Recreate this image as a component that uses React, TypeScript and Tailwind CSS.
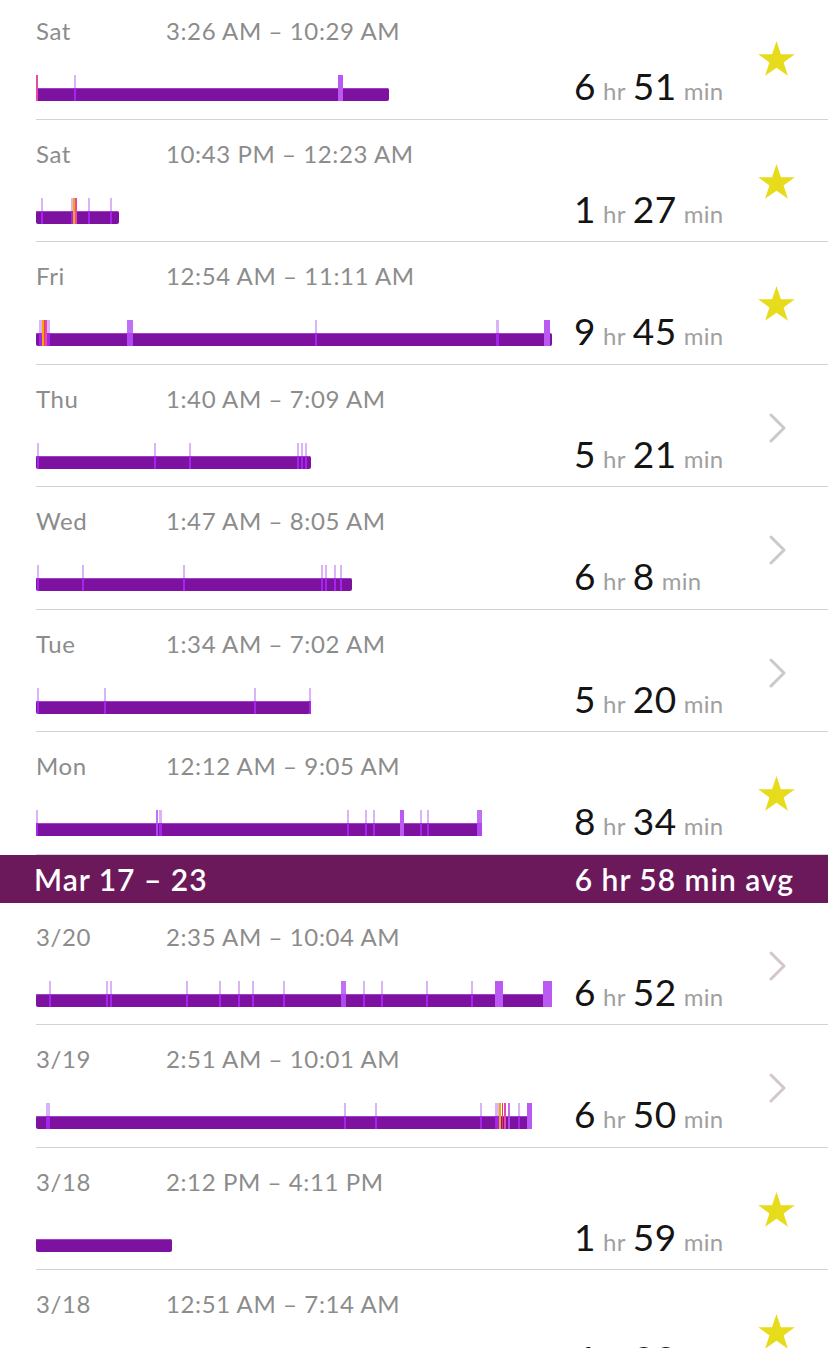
import React from "react";

type Tick = { x: number; w?: number; c?: "wide" | "pink" | "orange" | "red" | "bright" };

type Night = {
  day: string;
  time: string;
  hr: number;
  min: number;
  width: number;
  ticks: Tick[];
  icon: "star" | "chevron";
  chevronTint?: boolean;
};

const tickColors: Record<string, { top: string; body: string }> = {
  thin: { top: "#dbb4f7", body: "#a426ea" },
  wide: { top: "#bb5af2", body: "#bb5af2" },
  pink: { top: "#e64aa8", body: "#e64aa8" },
  orange: { top: "#f5a900", body: "#f5a900" },
  red: { top: "#ea3b5c", body: "#ea3b5c" },
  bright: { top: "#c070f5", body: "#b048f0" },
};

const week1: Night[] = [
  {
    day: "Sat",
    time: "3:26 AM – 10:29 AM",
    hr: 6,
    min: 51,
    width: 353,
    ticks: [{ x: 0, w: 2, c: "pink" }, { x: 38, w: 2 }, { x: 302, w: 5, c: "wide" }],
    icon: "star",
  },
  {
    day: "Sat",
    time: "10:43 PM – 12:23 AM",
    hr: 1,
    min: 27,
    width: 83,
    ticks: [
      { x: 5, w: 2 },
      { x: 35, w: 2 },
      { x: 37, w: 2, c: "orange" },
      { x: 39, w: 2, c: "pink" },
      { x: 52, w: 2 },
      { x: 74, w: 2 },
    ],
    icon: "star",
  },
  {
    day: "Fri",
    time: "12:54 AM – 11:11 AM",
    hr: 9,
    min: 45,
    width: 516,
    ticks: [
      { x: 3, w: 3 },
      { x: 6, w: 2, c: "orange" },
      { x: 8, w: 1, c: "red" },
      { x: 9, w: 2, c: "pink" },
      { x: 11, w: 3 },
      { x: 91, w: 6, c: "bright" },
      { x: 279, w: 2 },
      { x: 460, w: 3 },
      { x: 508, w: 6, c: "wide" },
    ],
    icon: "star",
  },
  {
    day: "Thu",
    time: "1:40 AM – 7:09 AM",
    hr: 5,
    min: 21,
    width: 275,
    ticks: [{ x: 1 }, { x: 118 }, { x: 153 }, { x: 261 }, { x: 265 }, { x: 269 }],
    icon: "chevron",
  },
  {
    day: "Wed",
    time: "1:47 AM – 8:05 AM",
    hr: 6,
    min: 8,
    width: 316,
    ticks: [{ x: 1 }, { x: 46 }, { x: 147 }, { x: 285 }, { x: 289 }, { x: 298 }, { x: 304 }],
    icon: "chevron",
  },
  {
    day: "Tue",
    time: "1:34 AM – 7:02 AM",
    hr: 5,
    min: 20,
    width: 274,
    ticks: [{ x: 1 }, { x: 68 }, { x: 218 }, { x: 273 }],
    icon: "chevron",
  },
  {
    day: "Mon",
    time: "12:12 AM – 9:05 AM",
    hr: 8,
    min: 34,
    width: 446,
    ticks: [
      { x: 0 },
      { x: 120, w: 2, c: "bright" },
      { x: 123, w: 3 },
      { x: 311 },
      { x: 329 },
      { x: 337 },
      { x: 364, w: 4, c: "wide" },
      { x: 384 },
      { x: 391 },
      { x: 441, w: 5, c: "bright" },
    ],
    icon: "star",
  },
];

const week2: Night[] = [
  {
    day: "3/20",
    time: "2:35 AM – 10:04 AM",
    hr: 6,
    min: 52,
    width: 516,
    ticks: [
      { x: 13 },
      { x: 70 },
      { x: 74 },
      { x: 150 },
      { x: 183 },
      { x: 202 },
      { x: 216 },
      { x: 247 },
      { x: 305, w: 5, c: "bright" },
      { x: 327 },
      { x: 345 },
      { x: 390 },
      { x: 435 },
      { x: 459, w: 8, c: "wide" },
      { x: 507, w: 9, c: "wide" },
    ],
    icon: "chevron",
    chevronTint: true,
  },
  {
    day: "3/19",
    time: "2:51 AM – 10:01 AM",
    hr: 6,
    min: 50,
    width: 496,
    ticks: [
      { x: 10, w: 4 },
      { x: 308 },
      { x: 339 },
      { x: 444 },
      { x: 459, w: 4 },
      { x: 463, w: 2, c: "orange" },
      { x: 466, w: 1, c: "red" },
      { x: 468, w: 2, c: "pink" },
      { x: 472, w: 2, c: "bright" },
      { x: 482 },
      { x: 491, w: 5, c: "wide" },
    ],
    icon: "chevron",
    chevronTint: true,
  },
  {
    day: "3/18",
    time: "2:12 PM – 4:11 PM",
    hr: 1,
    min: 59,
    width: 136,
    ticks: [],
    icon: "star",
  },
  {
    day: "3/18",
    time: "12:51 AM – 7:14 AM",
    hr: 6,
    min: 23,
    width: 420,
    ticks: [{ x: 2 }, { x: 90 }, { x: 240 }],
    icon: "star",
  },
];

function SleepBar({ width, ticks }: { width: number; ticks: Tick[] }) {
  return (
    <svg width={540} height={26} className="block">
      <rect x={0} y={13} width={width} height={13} rx={2} fill="#7d11a0" />
      <rect x={0} y={13} width={width - 2} height={1} fill="#a440c8" />
      {ticks.map((t, i) => {
        const col = tickColors[t.c ?? "thin"];
        const w = t.w ?? 2;
        return (
          <g key={i}>
            <rect x={t.x} y={0} width={w} height={13} fill={col.top} />
            <rect x={t.x} y={13} width={w} height={13} fill={col.body} />
          </g>
        );
      })}
    </svg>
  );
}

function Star() {
  return (
    <svg width={37} height={35} viewBox="0 0 37 35" className="block">
      <polygon
        points="18.5,0 22.9,13.2 36.8,13.3 25.6,21.5 29.9,34.8 18.5,26.7 7.1,34.8 11.4,21.5 0.2,13.3 14.1,13.2"
        fill="#e6dc1c"
      />
    </svg>
  );
}

function Chevron({ tint }: { tint?: boolean }) {
  return (
    <svg width={20} height={30} viewBox="0 0 20 30" className="block">
      <path
        d="M3 2 L16 15 L3 28"
        fill="none"
        stroke={tint ? "#d4c6cf" : "#c9c9ce"}
        strokeWidth={3}
        strokeLinecap="round"
        strokeLinejoin="round"
      />
    </svg>
  );
}

function NightRow({ night }: { night: Night }) {
  return (
    <div className="ml-[36px] h-[122.5px] border-b border-[#d8d1d2] flex">
      <div className="w-[538px] flex flex-col">
        <div className="flex pt-[20px] text-[24px] leading-[28px] tracking-[0.6px] text-[#8c8c8c]">
          <span className="w-[130px]">{night.day}</span>
          <span>{night.time}</span>
        </div>
        <div className="mt-[30px]">
          <SleepBar width={night.width} ticks={night.ticks} />
        </div>
      </div>
      <div className="w-[182px] pt-[70px] flex items-baseline leading-[37px] whitespace-nowrap">
        <span className="text-[37px] tracking-[0.5px] text-[#141414]">{night.hr}</span>
        <span className="text-[24px] tracking-[0.3px] text-[#a0a0a0] ml-[7px] mr-[7px]">hr</span>
        <span className="text-[37px] tracking-[0.5px] text-[#141414]">{night.min}</span>
        <span className="text-[24px] tracking-[0.3px] text-[#a0a0a0] ml-[7px]">min</span>
      </div>
      <div className="w-[40px] flex justify-center">
        {night.icon === "star" ? (
          <div className="pt-[44px]">
            <Star />
          </div>
        ) : (
          <div className="pt-[48px] pl-[4px]">
            <Chevron tint={night.chevronTint} />
          </div>
        )}
      </div>
    </div>
  );
}

export default function App() {
  return (
    <div
      className="w-[828px] h-[1348px] overflow-hidden bg-white"
      style={{ fontFamily: "Lato, 'Open Sans', sans-serif" }}
    >
      <div className="-mt-[3px]">
        {week1.map((n, i) => (
          <NightRow key={i} night={n} />
        ))}
        <div className="h-[48px] bg-[#6c195c] flex items-center justify-between pl-[34px] pr-[34px] text-white font-semibold text-[30px] tracking-[1px] leading-none">
          <span>Mar 17 – 23</span>
          <span>6 hr 58 min avg</span>
        </div>
        {week2.map((n, i) => (
          <NightRow key={i} night={n} />
        ))}
      </div>
    </div>
  );
}
